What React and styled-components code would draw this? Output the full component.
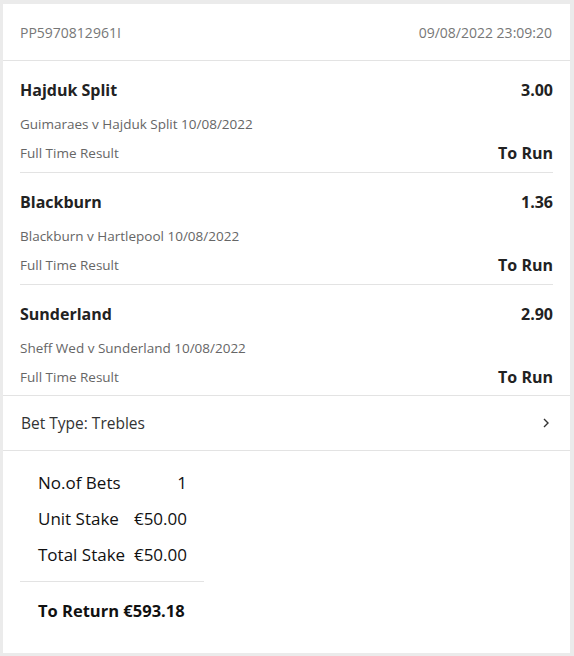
import React from "react";
import styled, { createGlobalStyle } from "styled-components";

const GlobalStyle = createGlobalStyle`
  body {
    margin: 0;
    background: #ebebeb;
    font-family: "Open Sans", "Noto Sans", sans-serif;
  }
`;

const selections = [
  { name: "Hajduk Split", odds: "3.00", match: "Guimaraes v Hajduk Split 10/08/2022" },
  { name: "Blackburn", odds: "1.36", match: "Blackburn v Hartlepool 10/08/2022" },
  { name: "Sunderland", odds: "2.90", match: "Sheff Wed v Sunderland 10/08/2022" },
];

const stakes = [
  { label: "No.of Bets", value: "1" },
  { label: "Unit Stake", value: "€50.00" },
  { label: "Total Stake", value: "€50.00" },
];

export default function App() {
  return (
    <>
      <GlobalStyle />
      <Card>
        <Header>
          <span>PP5970812961I</span>
          <span>09/08/2022 23:09:20</span>
        </Header>

        <SelectionList>
          {selections.map((s) => (
            <Selection key={s.name}>
              <Row>
                <Strong>{s.name}</Strong>
                <Strong>{s.odds}</Strong>
              </Row>
              <Muted $gap={14}>{s.match}</Muted>
              <Row $gap={9}>
                <Muted>Full Time Result</Muted>
                <Strong>To Run</Strong>
              </Row>
            </Selection>
          ))}
        </SelectionList>

        <BetType>
          <span>Bet Type: Trebles</span>
          <svg width="8" height="12" viewBox="0 0 8 12">
            <path d="M2 2l4 4-4 4" fill="none" stroke="#333" strokeWidth="1.4" />
          </svg>
        </BetType>

        <Summary>
          <SummaryBox>
            <StakeGrid>
              {stakes.map((st) => (
                <React.Fragment key={st.label}>
                  <span>{st.label}</span>
                  <Value>{st.value}</Value>
                </React.Fragment>
              ))}
            </StakeGrid>
            <ReturnLine>To Return €593.18</ReturnLine>
          </SummaryBox>
        </Summary>
      </Card>
    </>
  );
}

const Card = styled.div`
  margin: 4px 4px 3px 3px;
  height: 649px;
  background: #fff;
  display: flex;
  flex-direction: column;
`;

const Header = styled.div`
  height: 56px;
  padding: 0 18px 0 17px;
  display: flex;
  align-items: center;
  justify-content: space-between;
  font-size: 14px;
  color: #777;
  border-bottom: 1px solid #e3e3e3;
`;

const SelectionList = styled.div`
  border-bottom: 1px solid #e3e3e3;
`;

const Selection = styled.div`
  margin: 0 17px;
  padding: 18px 0 8px;
  border-bottom: 1px solid #e3e3e3;

  &:last-child {
    padding-bottom: 7px;
    border-bottom: none;
  }
`;

const Row = styled.div`
  display: flex;
  align-items: center;
  justify-content: space-between;
  margin-top: ${(p) => p.$gap || 0}px;
`;

const Strong = styled.span`
  font-size: 16px;
  line-height: 22px;
  font-weight: 700;
  color: #222;
`;

const Muted = styled.div`
  font-size: 13.5px;
  line-height: 18px;
  color: #666;
  margin-top: ${(p) => p.$gap || 0}px;
`;

const BetType = styled.div`
  height: 54px;
  padding: 0 20px 0 18px;
  display: flex;
  align-items: center;
  justify-content: space-between;
  font-size: 15.5px;
  color: #333;
  border-bottom: 1px solid #e3e3e3;
`;

const Summary = styled.div`
  flex: 1;
  padding: 14px 0 0 17px;
`;

const SummaryBox = styled.div`
  width: 184px;
`;

const StakeGrid = styled.div`
  display: grid;
  grid-template-columns: auto auto;
  justify-content: space-between;
  padding: 0 17px 8px 18px;
  font-size: 17px;
  line-height: 36px;
  color: #111;
  border-bottom: 1px solid #e3e3e3;
`;

const Value = styled.span`
  justify-self: end;
`;

const ReturnLine = styled.div`
  margin-top: 17px;
  padding-left: 18px;
  font-size: 16.5px;
  line-height: 24px;
  font-weight: 700;
  color: #111;
`;
